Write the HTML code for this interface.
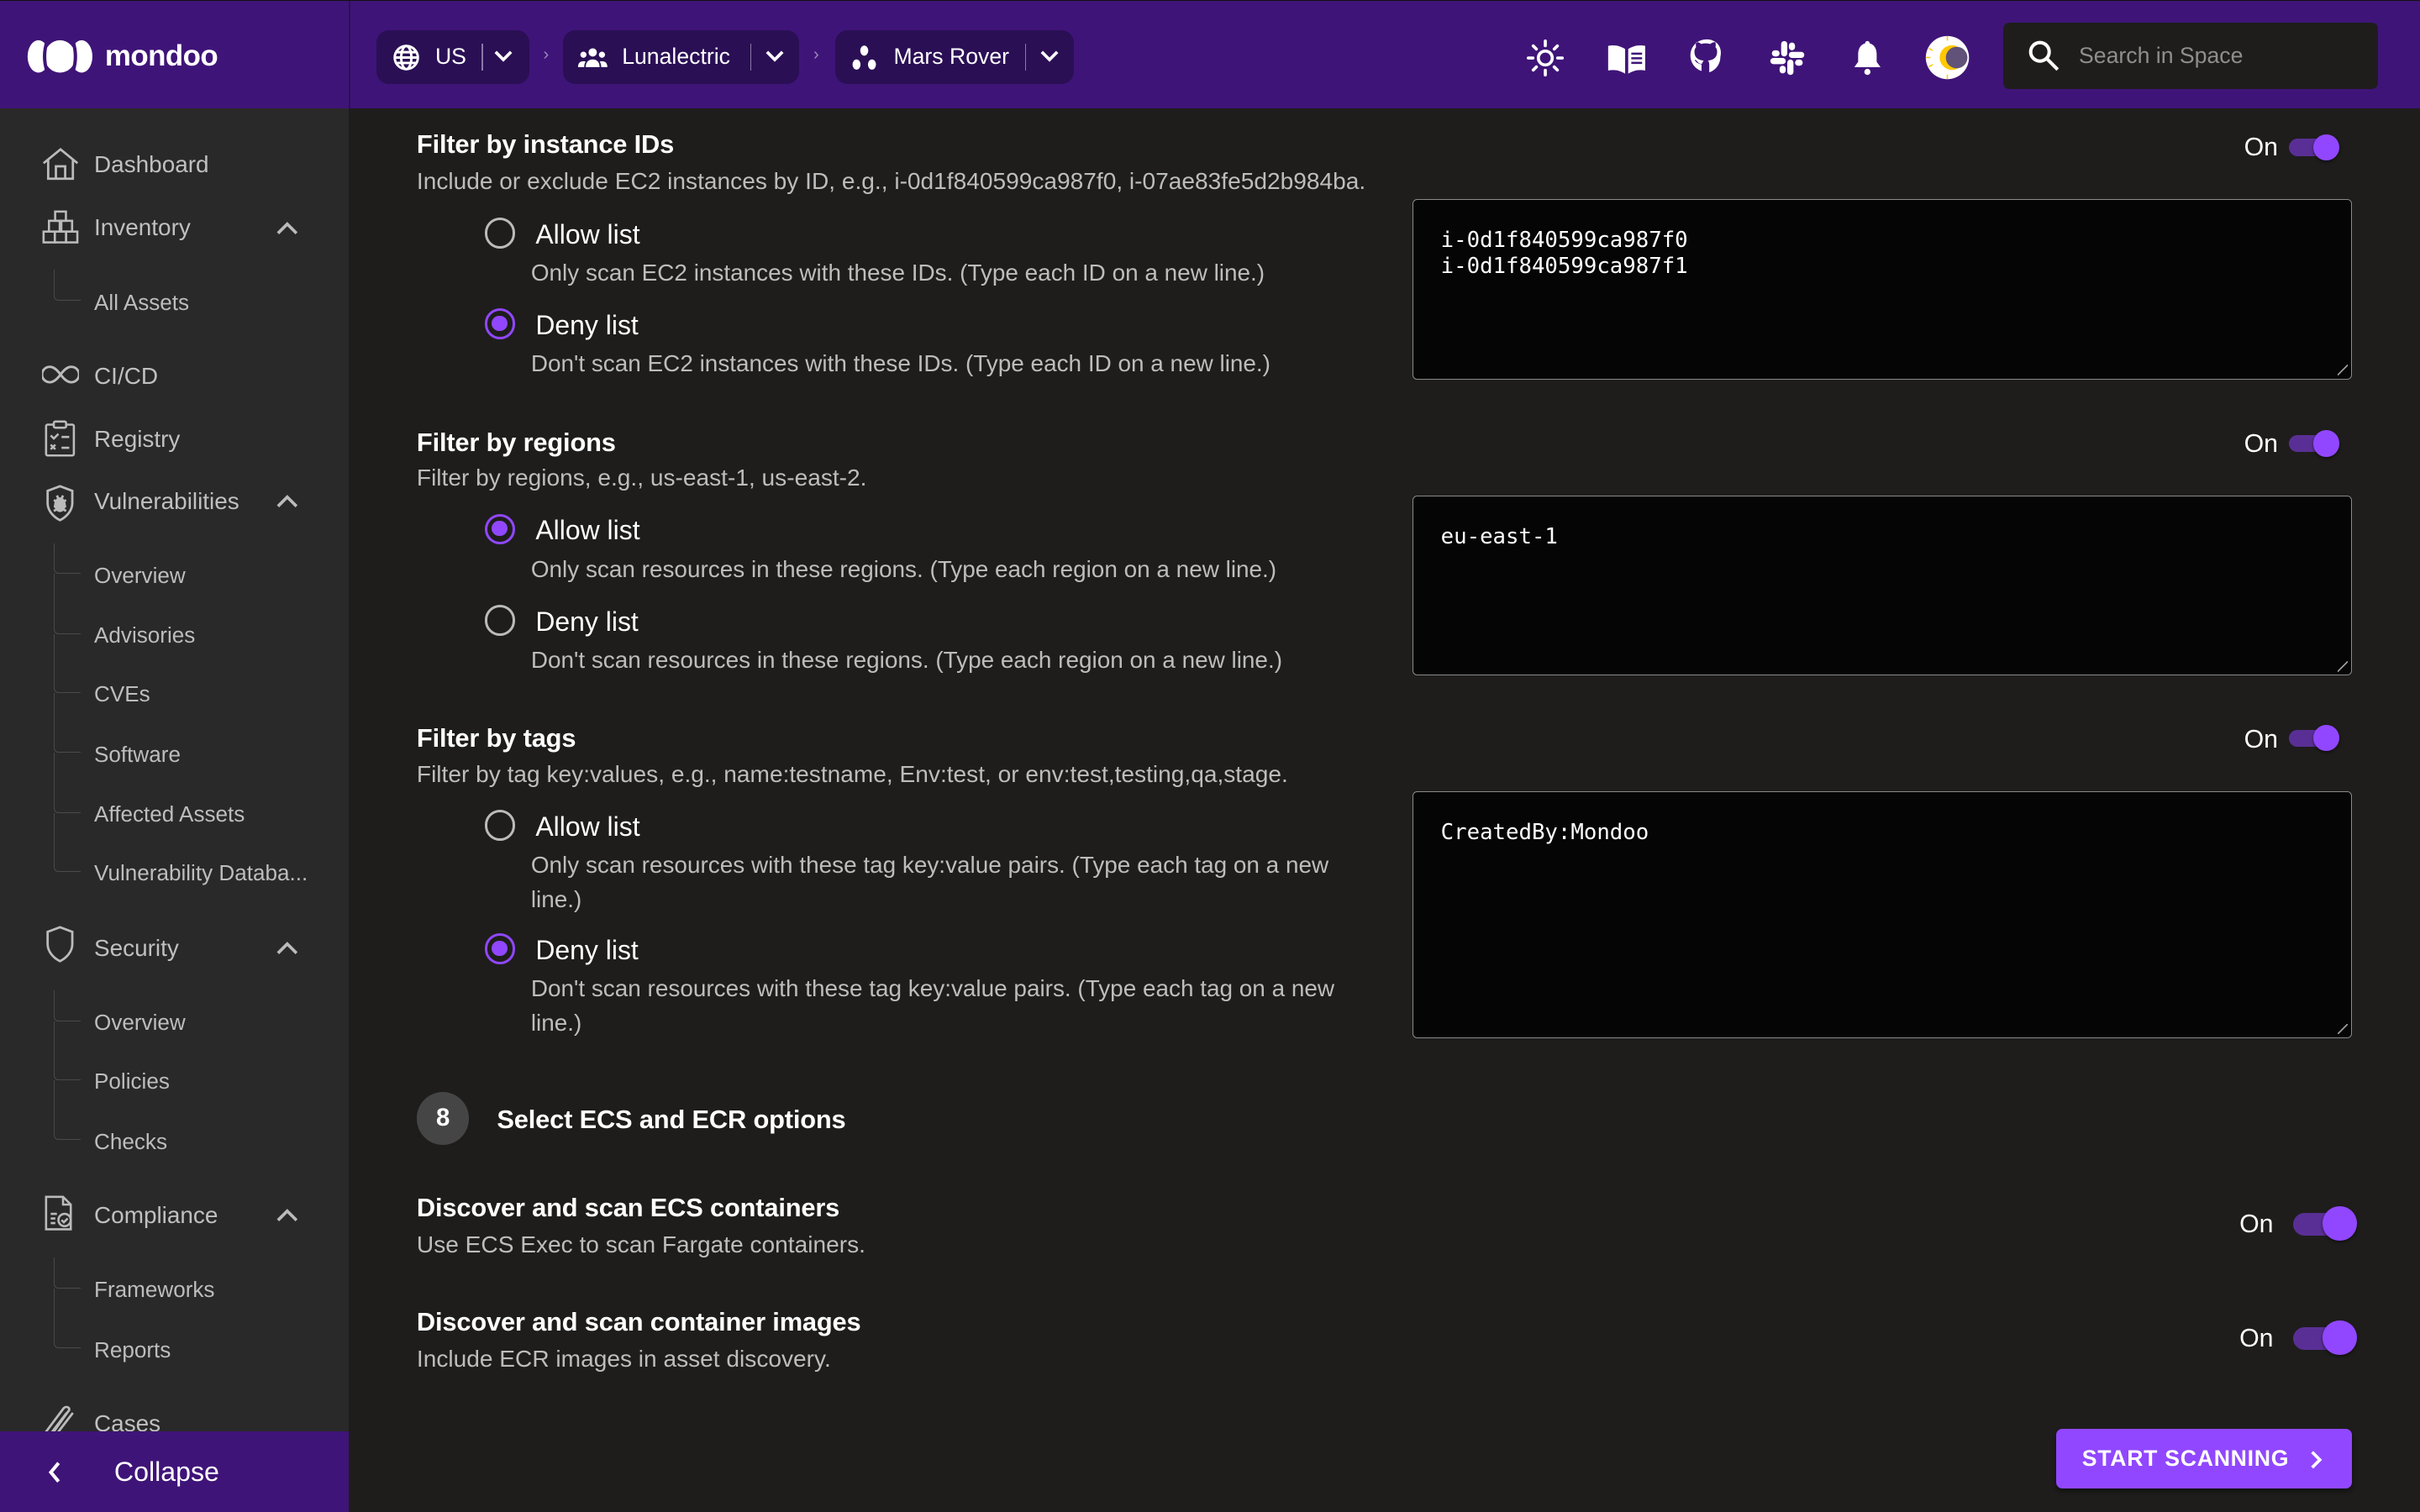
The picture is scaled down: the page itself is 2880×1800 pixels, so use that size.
<!DOCTYPE html>
<html><head><meta charset="utf-8"><style>
*{margin:0;padding:0;box-sizing:border-box}
html,body{width:2880px;height:1800px;overflow:hidden;background:#1e1d1c}
#w{zoom:1.83673;width:1568px;height:980px;position:relative;font-family:"Liberation Sans",Arial,sans-serif;color:#fff;background:#1e1d1c;overflow:hidden}
.a{position:absolute;white-space:nowrap}
.hdr{position:absolute;left:0;top:0;width:1568px;height:70px;background:#3f1478;border-top:1px solid #111}
.side{position:absolute;left:0;top:70px;width:226px;height:910px;background:#292929}
.pill{position:absolute;top:19px;height:35px;background:#2a0f55;border-radius:8px}
.pill .t{position:absolute;top:9px;font-size:14.5px;color:#fff}
.pill .sep{position:absolute;top:9px;width:1px;height:17px;background:#8a79a8}
.ni{position:absolute;left:61px;font-size:15.2px;color:#c0c0c0;line-height:20px}
.sub{position:absolute;left:61px;font-size:14.2px;color:#bdbdbd;line-height:20px}
.tree{position:absolute;left:35px;border-left:1px solid #4a4a4a;border-bottom:1px solid #4a4a4a;width:17px;border-bottom-left-radius:3px}
.ico{position:absolute;left:27px}
.chev{position:absolute;left:179px}
.h{position:absolute;left:270px;font-size:16.8px;font-weight:bold;line-height:20px;letter-spacing:-.1px}
.d{position:absolute;left:270px;font-size:15.3px;color:#bdbdbd;line-height:20px}
.rl{position:absolute;left:347px;font-size:17.4px;line-height:20px}
.rd{position:absolute;left:344px;font-size:15.2px;color:#bdbdbd;line-height:22px}
.ro{position:absolute;left:314px;width:20px;height:20px;border-radius:50%;border:2px solid #bbb}
.rs{position:absolute;left:314px;width:20px;height:20px;border-radius:50%;border:2px solid #9147ff}
.rs:after{content:"";position:absolute;left:3px;top:3px;width:10px;height:10px;border-radius:50%;background:#9147ff}
.ta{position:absolute;left:915px;width:609px;background:#050505;border:1px solid #8a8a8a;border-radius:3px}
.ta pre{position:absolute;left:18px;top:18px;font-family:"DejaVu Sans Mono","Liberation Mono",monospace;font-size:14px;line-height:17px;color:#fff}
.ta:after{content:"";position:absolute;right:2px;bottom:2px;width:7px;height:7px;background:linear-gradient(135deg,transparent 45%,#999 45%,#999 55%,transparent 55%)}
.on{position:absolute;font-size:16.5px;line-height:20px}
.tg{position:absolute;width:32px;height:11px;border-radius:6px;background:#5a2f95}
.tg:after{content:"";position:absolute;right:-1px;top:-3px;width:17px;height:17px;border-radius:50%;background:#9147ff;box-shadow:0 1px 2px rgba(0,0,0,.5)}
.tgb{position:absolute;width:40px;height:15px;border-radius:8px;background:#5a2f95}
.tgb:after{content:"";position:absolute;right:-1px;top:-4px;width:22px;height:22px;border-radius:50%;background:#9147ff;box-shadow:0 1px 2px rgba(0,0,0,.5)}
</style></head><body><div id="w">
<div class="hdr">
 <svg class="a" style="left:17px;top:25px" width="44" height="22" viewBox="0 0 44 22"><ellipse cx="8" cy="11" rx="7" ry="10.5" fill="#fff"/><ellipse cx="22" cy="11" rx="10" ry="10.5" fill="#fff"/><ellipse cx="36" cy="11" rx="7" ry="10.5" fill="#fff"/><path d="M13.5 1.5q-3 9.5 0 19M30.5 1.5q3 9.5 0 19" stroke="#3f1478" stroke-width="2.2" fill="none"/></svg>
 <div class="a" style="left:68px;top:25px;font-size:19px;font-weight:bold;letter-spacing:-.3px">mondoo</div>
 <div style="position:absolute;left:226px;top:0;width:1px;height:70px;background:#2e0e5a"></div>
 <div class="pill" style="left:244px;width:99px">
  <svg class="a" style="left:10px;top:9px" width="18" height="18" viewBox="0 0 18 18" fill="none" stroke="#fff" stroke-width="1.6"><circle cx="9" cy="9" r="7.5"/><ellipse cx="9" cy="9" rx="3.3" ry="7.5"/><path d="M1.5 9h15M2.5 5.5h13M2.5 12.5h13"/></svg>
  <span class="t" style="left:38px">US</span><span class="sep" style="left:68px"></span>
  <svg class="a" style="left:76px;top:13px" width="12" height="8" viewBox="0 0 12 8"><path d="M1 1l5 5 5-5" stroke="#fff" stroke-width="2" fill="none"/></svg>
 </div>
 <div class="a" style="left:352px;top:29px;font-size:11px;color:#9a8ab8">›</div>
 <div class="pill" style="left:365px;width:153px">
  <svg class="a" style="left:9px;top:11px" width="20" height="14" viewBox="0 0 20 14" fill="#fff"><circle cx="10" cy="3.5" r="2.7"/><circle cx="4" cy="5" r="2"/><circle cx="16" cy="5" r="2"/><path d="M5.5 13c0-3.5 2-5 4.5-5s4.5 1.5 4.5 5zM0.5 13c0-2.5 1.2-3.8 3.5-3.8.6 0 1 .1 1.4.3-.6.9-.9 2-.9 3.5zM19.5 13c0-2.5-1.2-3.8-3.5-3.8-.6 0-1 .1-1.4.3.6.9.9 2 .9 3.5z"/></svg>
  <span class="t" style="left:38px">Lunalectric</span><span class="sep" style="left:121px"></span>
  <svg class="a" style="left:131px;top:13px" width="12" height="8" viewBox="0 0 12 8"><path d="M1 1l5 5 5-5" stroke="#fff" stroke-width="2" fill="none"/></svg>
 </div>
 <div class="a" style="left:527px;top:29px;font-size:11px;color:#9a8ab8">›</div>
 <div class="pill" style="left:541px;width:155px">
  <svg class="a" style="left:10px;top:9px" width="18" height="18" viewBox="0 0 18 18" fill="#fff"><ellipse cx="9" cy="4.5" rx="2.6" ry="3.3"/><ellipse cx="4" cy="13.5" rx="2.6" ry="3.3"/><ellipse cx="14" cy="13.5" rx="2.6" ry="3.3"/></svg>
  <span class="t" style="left:38px">Mars Rover</span><span class="sep" style="left:123px"></span>
  <svg class="a" style="left:133px;top:13px" width="12" height="8" viewBox="0 0 12 8"><path d="M1 1l5 5 5-5" stroke="#fff" stroke-width="2" fill="none"/></svg>
 </div>
 <svg class="a" style="left:989px;top:25px" width="24" height="24" viewBox="0 0 24 24" fill="none" stroke="#fff" stroke-width="2"><circle cx="12" cy="12" r="4.5"/><path d="M12 1v3M12 20v3M1 12h3M20 12h3M4.2 4.2l2 2M17.8 17.8l2 2M4.2 19.8l2-2M17.8 6.2l2-2" stroke-linecap="round"/></svg>
 <svg class="a" style="left:1041px;top:27px" width="26" height="21" viewBox="0 0 26 21" fill="#fff"><path d="M1 2c4-1 8 0 11 2v16c-3-2-7-3-11-2zM25 2c-4-1-8 0-11 2v16c3-2 7-3 11-2z"/><path d="M16 7h7M16 10h7M16 13h7" stroke="#3f1478" stroke-width="1.4"/></svg>
 <svg class="a" style="left:1094px;top:24px" width="24" height="26" viewBox="0 0 24 26"><path d="M12 1C6 1 1.5 5.5 1.5 11.5c0 4.7 3 8.6 7.2 10v-4.3c-3-.5-4-2-4.5-3 1 0 1.8 1.2 2.5 2 .8.8 2 .7 2.5.4.1-.8.5-1.4.9-1.8-3.5-.4-6-1.8-6-5.8 0-1.2.4-2.2 1.1-3-.2-.4-.4-1.800.1-3.2 0 0 1.3-.3 3.3 1.2 1.7-.5 4-.5 5.7 0 2-1.5 3.3-1.2 3.3-1.2.5 1.4.3 2.8.1 3.2.7.8 1.1 1.8 1.1 3 0 4-2.5 5.4-6 5.8.5.5.9 1.3.9 2.6v5c4.2-1.4 7.2-5.3 7.2-10C22.5 5.5 18 1 12 1z" fill="#fff"/></svg>
 <svg class="a" style="left:1146px;top:25px" width="24" height="24" viewBox="0 0 24 24" fill="#fff"><rect x="8" y="1" width="4" height="10" rx="2"/><rect x="2" y="7" width="5" height="4" rx="2"/><rect x="13" y="8" width="10" height="4" rx="2"/><rect x="13" y="2" width="4" height="5" rx="2"/><rect x="12" y="13" width="4" height="10" rx="2"/><rect x="17" y="13" width="5" height="4" rx="2"/><rect x="1" y="12" width="10" height="4" rx="2"/><rect x="7" y="17" width="4" height="5" rx="2"/></svg>
 <svg class="a" style="left:1200px;top:25px" width="20" height="24" viewBox="0 0 20 24" fill="#fff"><path d="M10 1c1 0 1.5.7 1.5 1.5 3 .8 4.5 3.5 4.5 7v5l2.5 3.5H1.5L4 14.5v-5c0-3.5 1.5-6.2 4.5-7C8.5 1.7 9 1 10 1z"/><circle cx="10" cy="21" r="2"/></svg>
 <svg class="a" style="left:1247px;top:22px" width="30" height="30" viewBox="0 0 30 30"><circle cx="15" cy="15" r="14" fill="#fff"/><circle cx="18" cy="15" r="8" fill="#ffc800"/><circle cx="21" cy="15" r="7" fill="#605278"/><path d="M15 1v3M3 9l2.5 1.5M1 15h3M3 21l2.5-1.5M15 26v3" stroke="#ffc800" stroke-width=".8"/></svg>
 <div class="a" style="left:1298px;top:14px;width:243px;height:43px;background:#1e1d1c;border-radius:4px">
  <svg class="a" style="left:16px;top:11px" width="21" height="21" viewBox="0 0 21 21" fill="none" stroke="#fff" stroke-width="2.2"><circle cx="8" cy="8" r="6"/><path d="M12.5 12.5l7 7"/></svg>
  <div class="a" style="left:49px;top:13px;font-size:14.5px;color:#8e8e8e">Search in Space</div>
 </div>
</div>
<div class="side">
 <svg class="ico" style="top:26px" width="24" height="22" viewBox="0 0 24 22" fill="none" stroke="#bbb" stroke-width="1.5"><path d="M1 10L12 1l11 9M4 8v12h16V8M9 20v-8h6v8"/></svg>
 <div class="ni" style="top:27px">Dashboard</div>
 <svg class="ico" style="top:66px" width="24" height="22" viewBox="0 0 24 22" fill="none" stroke="#bbb" stroke-width="1.4"><rect x="8.5" y="1" width="7" height="6"/><rect x="4.5" y="7" width="7" height="7"/><rect x="12.5" y="7" width="7" height="7"/><rect x="1" y="14" width="7.3" height="7"/><rect x="8.3" y="14" width="7.3" height="7"/><rect x="15.6" y="14" width="7.3" height="7"/></svg>
 <div class="ni" style="top:68px">Inventory</div>
 <svg class="chev" style="top:73px" width="14" height="9" viewBox="0 0 14 9"><path d="M1 8l6-6 6 6" stroke="#bbb" stroke-width="2" fill="none"/></svg>
 <div class="tree" style="top:105px;height:20px"></div>
 <div class="sub" style="top:116px">All Assets</div>
 <svg class="ico" style="top:166px" width="24" height="14" viewBox="0 0 24 14" fill="none" stroke="#bbb" stroke-width="1.6"><path d="M12 7c-3-4-5-5-7-5a5 5 0 000 10c2 0 4-1 7-5s5-5 7-5a5 5 0 010 10c-2 0-4-1-7-5z"/></svg>
 <div class="ni" style="top:164px">CI/CD</div>
 <svg class="ico" style="top:202px;left:29px" width="20" height="24" viewBox="0 0 20 24" fill="none" stroke="#bbb" stroke-width="1.4"><rect x="1" y="3" width="18" height="20" rx="1"/><rect x="6" y="1" width="8" height="4" rx="1" fill="#292929"/><path d="M4 10l2 2 3-3M11 11h5M4 16l3 3M7 16l-3 3M11 18h5"/></svg>
 <div class="ni" style="top:205px">Registry</div>
 <svg class="ico" style="top:244px;left:29px" width="20" height="24" viewBox="0 0 20 24" fill="none" stroke="#bbb" stroke-width="1.5"><path d="M10 1l8 3v8c0 5-4 9-8 11-4-2-8-6-8-11V4z"/><ellipse cx="10" cy="13" rx="3" ry="4" fill="#bbb"/><path d="M6 10l2 1M14 10l-2 1M6 14h2M12 14h2M6 17l2-1M14 17l-2-1M8 7l1 2M12 7l-1 2"/></svg>
 <div class="ni" style="top:245px">Vulnerabilities</div>
 <svg class="chev" style="top:250px" width="14" height="9" viewBox="0 0 14 9"><path d="M1 8l6-6 6 6" stroke="#bbb" stroke-width="2" fill="none"/></svg>
 <div class="tree" style="top:282px;height:20px"></div>
 <div class="sub" style="top:293px">Overview</div>
 <div class="tree" style="top:302px;height:39px;border-top:0"></div>
 <div class="sub" style="top:332px">Advisories</div>
 <div class="tree" style="top:341px;height:38px"></div>
 <div class="sub" style="top:370px">CVEs</div>
 <div class="tree" style="top:379px;height:39px"></div>
 <div class="sub" style="top:409px">Software</div>
 <div class="tree" style="top:418px;height:39px"></div>
 <div class="sub" style="top:448px">Affected Assets</div>
 <div class="tree" style="top:457px;height:38px"></div>
 <div class="sub" style="top:486px">Vulnerability Databa...</div>
 <svg class="ico" style="top:530px;left:29px" width="20" height="24" viewBox="0 0 20 24" fill="none" stroke="#bbb" stroke-width="1.5"><path d="M10 1l8 3v8c0 5-4 9-8 11-4-2-8-6-8-11V4z"/></svg>
 <div class="ni" style="top:535px">Security</div>
 <svg class="chev" style="top:540px" width="14" height="9" viewBox="0 0 14 9"><path d="M1 8l6-6 6 6" stroke="#bbb" stroke-width="2" fill="none"/></svg>
 <div class="tree" style="top:572px;height:20px"></div>
 <div class="sub" style="top:583px">Overview</div>
 <div class="tree" style="top:592px;height:38px"></div>
 <div class="sub" style="top:621px">Policies</div>
 <div class="tree" style="top:630px;height:39px"></div>
 <div class="sub" style="top:660px">Checks</div>
 <svg class="ico" style="top:705px;left:29px" width="20" height="24" viewBox="0 0 20 24" fill="none" stroke="#bbb" stroke-width="1.4"><path d="M1 1h11l5 5v16H1zM12 1v5h5"/><circle cx="13" cy="16" r="4"/><path d="M11 16l1.5 1.5L15 15M4 12h4M4 15h3M4 18h3"/></svg>
 <div class="ni" style="top:708px">Compliance</div>
 <svg class="chev" style="top:713px" width="14" height="9" viewBox="0 0 14 9"><path d="M1 8l6-6 6 6" stroke="#bbb" stroke-width="2" fill="none"/></svg>
 <div class="tree" style="top:745px;height:20px"></div>
 <div class="sub" style="top:756px">Frameworks</div>
 <div class="tree" style="top:765px;height:39px"></div>
 <div class="sub" style="top:795px">Reports</div>
 <svg class="ico" style="top:840px" width="24" height="20" viewBox="0 0 24 20" fill="none" stroke="#bbb" stroke-width="1.5"><path d="M2 19L14 3c2-2 5 0 3 2L7 19M6 19L16 6M10 19l10-13"/></svg>
 <div class="ni" style="top:843px">Cases</div>
 <div style="position:absolute;left:0;top:858px;width:226px;height:52px;background:#3f1478">
  <svg class="a" style="left:30px;top:18px" width="10" height="16" viewBox="0 0 10 16"><path d="M8 2L3 8l5 6" stroke="#fff" stroke-width="2.2" fill="none"/></svg>
  <div class="a" style="left:74px;top:16px;font-size:17.5px">Collapse</div>
 </div>
</div>

<div class="h" style="top:84px">Filter by instance IDs</div>
<div class="d" style="top:108px">Include or exclude EC2 instances by ID, e.g., i-0d1f840599ca987f0, i-07ae83fe5d2b984ba.</div>
<div class="ro" style="top:141px"></div><div class="rl" style="top:142px">Allow list</div>
<div class="rd" style="top:166px">Only scan EC2 instances with these IDs. (Type each ID on a new line.)</div>
<div class="rs" style="top:200px"></div><div class="rl" style="top:201px">Deny list</div>
<div class="rd" style="top:225px">Don't scan EC2 instances with these IDs. (Type each ID on a new line.)</div>
<div class="on" style="left:1454px;top:86px">On</div><div class="tg" style="left:1483px;top:90px"></div>
<div class="ta" style="top:129px;height:117px"><pre>i-0d1f840599ca987f0
i-0d1f840599ca987f1</pre></div>

<div class="h" style="top:277px">Filter by regions</div>
<div class="d" style="top:300px">Filter by regions, e.g., us-east-1, us-east-2.</div>
<div class="rs" style="top:333px"></div><div class="rl" style="top:334px">Allow list</div>
<div class="rd" style="top:358px">Only scan resources in these regions. (Type each region on a new line.)</div>
<div class="ro" style="top:392px"></div><div class="rl" style="top:393px">Deny list</div>
<div class="rd" style="top:417px">Don't scan resources in these regions. (Type each region on a new line.)</div>
<div class="on" style="left:1454px;top:278px">On</div><div class="tg" style="left:1483px;top:282px"></div>
<div class="ta" style="top:321px;height:117px"><pre>eu-east-1</pre></div>

<div class="h" style="top:469px">Filter by tags</div>
<div class="d" style="top:492px">Filter by tag key:values, e.g., name:testname, Env:test, or env:test,testing,qa,stage.</div>
<div class="ro" style="top:525px"></div><div class="rl" style="top:526px">Allow list</div>
<div class="rd" style="top:550px">Only scan resources with these tag key:value pairs. (Type each tag on a new<br>line.)</div>
<div class="rs" style="top:605px"></div><div class="rl" style="top:606px">Deny list</div>
<div class="rd" style="top:630px">Don't scan resources with these tag key:value pairs. (Type each tag on a new<br>line.)</div>
<div class="on" style="left:1454px;top:470px">On</div><div class="tg" style="left:1483px;top:473px"></div>
<div class="ta" style="top:513px;height:160px"><pre>CreatedBy:Mondoo</pre></div>

<div class="a" style="left:270px;top:708px;width:34px;height:34px;border-radius:50%;background:#454545;text-align:center;line-height:34px;font-size:16px;font-weight:bold">8</div>
<div class="h" style="left:322px;top:716px">Select ECS and ECR options</div>

<div class="h" style="top:773px">Discover and scan ECS containers</div>
<div class="d" style="top:797px">Use ECS Exec to scan Fargate containers.</div>
<div class="on" style="left:1451px;top:784px">On</div><div class="tgb" style="left:1486px;top:786px"></div>
<div class="h" style="top:847px">Discover and scan container images</div>
<div class="d" style="top:871px">Include ECR images in asset discovery.</div>
<div class="on" style="left:1451px;top:858px">On</div><div class="tgb" style="left:1486px;top:860px"></div>

<div class="a" style="left:1332px;top:926px;width:192px;height:39px;background:#9147ff;border-radius:4px;box-shadow:0 2px 3px rgba(0,0,0,.4)">
 <div class="a" style="left:17px;top:11px;font-size:14.5px;font-weight:bold;letter-spacing:.4px">START SCANNING</div>
 <svg class="a" style="left:164px;top:13px" width="9" height="14" viewBox="0 0 9 14"><path d="M2 2l5 5-5 5" stroke="#fff" stroke-width="2" fill="none"/></svg>
</div>
</div></body></html>
